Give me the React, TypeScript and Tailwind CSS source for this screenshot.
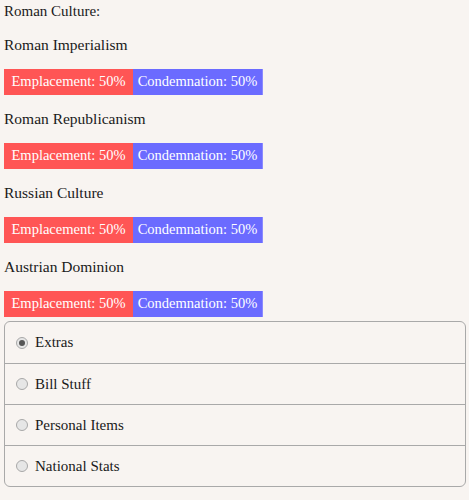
import React from "react";

const items = ["Roman Imperialism", "Roman Republicanism", "Russian Culture", "Austrian Dominion"];
const opts = ["Extras", "Bill Stuff", "Personal Items", "National Stats"];

export default function App() {
  return (
    <div className="min-h-[500px] bg-[#f8f4f1] text-[#1a1a1a] text-[15px] px-[4px] pt-[1px]" style={{ fontFamily: "'Liberation Serif', serif" }}>
      <div className="h-[20px] leading-[20px]">Roman Culture:</div>
      {items.map((t) => (
        <div key={t}>
          <div className="h-[20px] leading-[20px] mt-[14px] text-[15.5px]">{t}</div>
          <div className="flex mt-[14px] h-[26px] text-white text-[14.5px] whitespace-nowrap">
            <div className="w-[129px] bg-[#ff5555] flex items-center justify-center">Emplacement: 50%</div>
            <div className="w-[130px] bg-[#6b6bff] border-r border-[#8a8aff] flex items-center justify-center">Condemnation: 50%</div>
          </div>
        </div>
      ))}
      <div className="mt-[4px] w-[462px] border border-[#a9a9a9] rounded-[6px] overflow-hidden">
        {opts.map((o, i) => (
          <div key={o} className={"h-[41px] flex items-center pl-[11px] gap-[7px] " + (i > 0 ? "border-t border-[#a9a9a9]" : "")}>
            <span className="w-[12px] h-[12px] rounded-full border border-[#a8a8a8] bg-[#e6e6e6] flex items-center justify-center">
              {i === 0 && <span className="w-[6px] h-[6px] rounded-full bg-[#555]" />}
            </span>
            <span>{o}</span>
          </div>
        ))}
      </div>
    </div>
  );
}
